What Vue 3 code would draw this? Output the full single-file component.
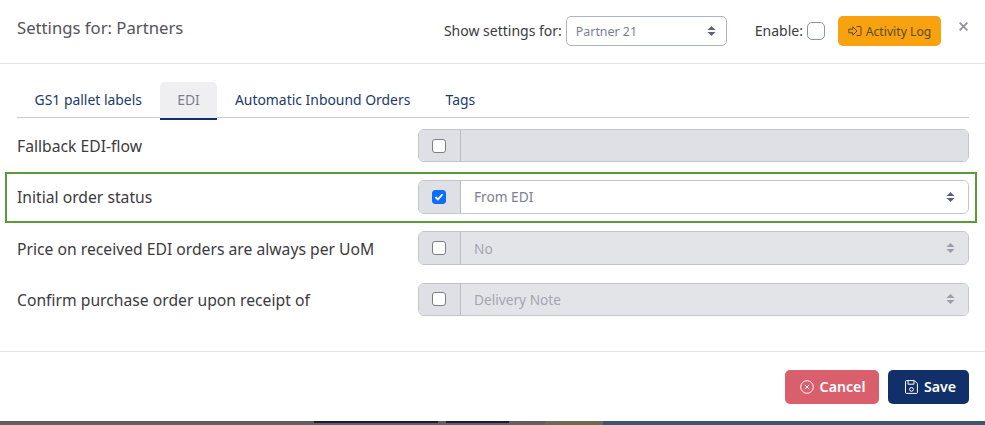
<script setup>
const rows = [
  { label: 'Fallback EDI-flow', checked: false, value: '', select: false },
  { label: 'Initial order status', checked: true, value: 'From EDI', select: true, active: true },
  { label: 'Price on received EDI orders are always per UoM', checked: false, value: 'No', select: true },
  { label: 'Confirm purchase order upon receipt of', checked: false, value: 'Delivery Note', select: true },
]
const tabs = ['GS1 pallet labels', 'EDI', 'Automatic Inbound Orders', 'Tags']
</script>

<template>
  <div class="page">
    <div class="modal">
      <header class="head">
        <h1 class="title">Settings for: Partners</h1>
        <div class="tools">
          <span class="lbl">Show settings for:</span>
          <div class="sel sel-top">
            <span>Partner 21</span>
            <svg class="updown" width="9" height="12" viewBox="0 0 10 12"><path d="M5 0.5 9.5 5H.5z"/><path d="M5 11.5 .5 7h9z"/></svg>
          </div>
          <span class="lbl enable">Enable:</span>
          <span class="cb cb-top"></span>
          <button class="log">
            <svg width="14" height="12" viewBox="0 0 14 12" fill="none" stroke="#5c4a20" stroke-width="1"><path d="M.8 4.2h4V1.8L9 6 4.8 10.2V7.8h-4z"/><path d="M8.5 1.5h3.7a.8.8 0 0 1 .8.8v7.4a.8.8 0 0 1-.8.8H8.5"/></svg>
            Activity Log
          </button>
          <svg class="close" width="9" height="9" viewBox="0 0 9 9" stroke="#8d939c" stroke-width="1.7"><path d="M.6.6l7.8 7.8M8.4.6.6 8.4"/></svg>
        </div>
      </header>

      <section class="body">
        <nav class="tabs">
          <a v-for="t in tabs" :key="t" class="tab" :class="{ on: t === 'EDI' }">{{ t }}</a>
        </nav>
        <div class="rows">
          <div v-for="r in rows" :key="r.label" class="row" :class="{ active: r.active }">
            <div class="label">{{ r.label }}</div>
            <div class="group">
              <div class="addon">
                <span v-if="!r.checked" class="cb"></span>
                <span v-else class="cb checked">
                  <svg width="10" height="8" viewBox="0 0 10 9" fill="none" stroke="#fff" stroke-width="2"><path d="M1 4.5 3.8 7.2 9 1.4"/></svg>
                </span>
              </div>
              <div class="field" :class="{ off: !r.checked, blank: !r.select }">
                <span>{{ r.value }}</span>
                <svg v-if="r.select" class="updown" width="9" height="12" viewBox="0 0 10 12"><path d="M5 0.5 9.5 5H.5z" /><path d="M5 11.5 .5 7h9z"/></svg>
              </div>
            </div>
          </div>
        </div>
      </section>

      <footer class="foot">
        <button class="btn cancel">
          <svg width="14" height="14" viewBox="0 0 14 14" fill="none" stroke="#fff" stroke-width="1"><circle cx="7" cy="7" r="6.3"/><path d="M4.8 4.8l4.4 4.4M9.2 4.8 4.8 9.2"/></svg>
          Cancel
        </button>
        <button class="btn save">
          <svg width="13" height="14" viewBox="0 0 13 14" fill="none" stroke="#fff" stroke-width="1"><path d="M1.5.6h8l2.9 2.9v8.9a1 1 0 0 1-1 1h-9.9a1 1 0 0 1-1-1V1.6a1 1 0 0 1 1-1z"/><path d="M3 .8v3.4h6V.8"/><circle cx="6.5" cy="9.4" r="1.9"/></svg>
          Save
        </button>
      </footer>
    </div>
    <div class="backdrop"></div>
  </div>
</template>

<style>
html, body { margin: 0; background: #fff; }
</style>

<style scoped>
.page { width: 985px; height: 425px; overflow: hidden; font-family: "Noto Sans", sans-serif; color: #3d3a40; display: flex; flex-direction: column; }
.modal { height: 421px; flex: none; background: #fff; display: flex; flex-direction: column; }
.backdrop { flex: 1; background: linear-gradient(90deg, #5f5a5e 0 314px, #1a1a30 314px 438px, #5f5a5e 438px 446px, #1a1a30 446px 509px, #5f5a5e 509px 546px, #6d6a52 546px 603px, #3f5570 603px 100%) 0 0 / 100% 2px no-repeat, linear-gradient(90deg, #686266 0 546px, #6d6a52 546px 603px, #3f5570 603px 100%); }
.head { height: 63px; flex: none; border-bottom: 1px solid #e4e4e6; display: flex; align-items: center; justify-content: space-between; padding: 0 17px; }
.title { margin: 0 0 7px; font-size: 16.7px; font-weight: 400; line-height: 24px; color: #55535a; }
.tools { display: flex; align-items: center; margin-top: -1px; }
.lbl { font-size: 14px; color: #3d3a40; margin-bottom: 2px; }
.sel { display: flex; align-items: center; justify-content: space-between; }
.sel-top { width: 161px; height: 30px; box-sizing: border-box; margin-left: 4px; padding: 0 10px 0 9px; border: 1px solid #b0b4c0; border-radius: 5px; font-size: 12.4px; color: #7b8090; }
.updown { fill: #5a6272; }
.enable { margin-left: 28px; }
.cb { width: 14px; height: 14px; box-sizing: border-box; border: 1px solid #7d7d85; border-radius: 3px; background: #fff; display: inline-flex; align-items: center; justify-content: center; }
.cb-top { width: 18px; height: 18px; margin-left: 4px; border-color: #8d93a5; border-radius: 5px; }
.log { margin-left: 13px; width: 103px; height: 30px; border: 0; padding: 0; border-radius: 5px; background: #f7a20e; color: #5c4a20; font: 400 12.2px "Noto Sans", sans-serif; display: inline-flex; align-items: center; justify-content: center; gap: 4px; }
.close { margin-left: 18px; margin-top: -10px; }
.body { flex: 1; padding: 18px 16px 0 17px; }
.tabs { display: flex; height: 35px; border-bottom: 1px solid #c9cbd3; }
.tab { height: 36px; box-sizing: border-box; padding: 0 17.6px; font-size: 13.92px; line-height: 35px; color: #1b3a6b; border-radius: 5px 5px 0 0; }
.tab.on { background: #efeff1; color: #7b8090; border-bottom: 2px solid #11306a; height: 38px; }
.rows { margin-top: 11px; display: flex; flex-direction: column; gap: 17.8px; }
.row { position: relative; display: flex; align-items: center; height: 33.4px; }
.row.active::after { content: ""; position: absolute; inset: -8px -8px -9px -12px; border: 2px solid #5a9a3a; pointer-events: none; }
.label { width: 401px; font-size: 15.7px; color: #3d3a40; padding-top: 1px; }
.group { width: 551px; height: 100%; box-sizing: border-box; display: flex; border: 1px solid #c2c4ce; border-radius: 6px; overflow: hidden; }
.addon { width: 40px; padding-right: 1px; flex: none; background: #dfe0e5; border-right: 1px solid #b8bac4; display: flex; align-items: center; justify-content: center; }
.checked { background: #0d6efd; border-color: #0d6efd; }
.field { flex: 1; display: flex; align-items: center; justify-content: space-between; padding: 0 13px; font-size: 13.7px; color: #7b8090; background: #fff; }
.field.off { background: #e3e4e8; color: #a2a6b0; }
.field.blank { background: #dfe0e5; }
.field .updown { fill: #5a6272; }
.field.off .updown { fill: #9a9ea8; }
.foot { height: 69px; flex: none; margin-top: auto; border-top: 1px solid #e4e4e6; display: flex; justify-content: flex-end; align-items: center; gap: 9px; padding: 0 16px 0 0; }
.btn { height: 34px; border: 0; padding: 0 0 0 1px; border-radius: 5px; color: #fff; font: 600 14.2px "Noto Sans", sans-serif; display: inline-flex; align-items: center; justify-content: center; gap: 6px; }
.cancel { width: 94px; background: #d95f6c; }
.save { width: 81px; background: #11306a; gap: 6px; padding-left: 4px; }
</style>
